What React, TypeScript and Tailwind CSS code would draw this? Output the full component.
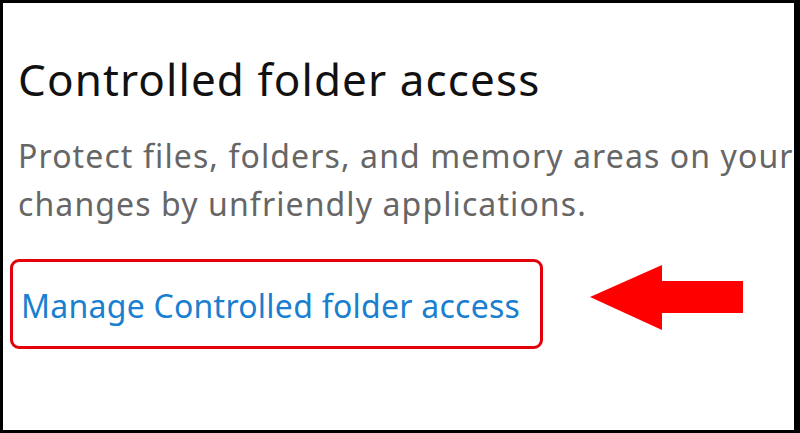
import React from "react";

export default function App() {
  return (
    <div
      className="w-[800px] h-[433px] bg-white border-black border-l-[3px] border-t-[3px] border-r-[6px] border-b-[3px] overflow-hidden box-border"
      style={{ fontFamily: '"Noto Sans", "Open Sans", sans-serif' }}
    >
      <div className="pl-[15px] pt-[50px] w-[1400px]">
        <h1 className="text-[44px] leading-[52px] text-[#111] tracking-[1.1px]">
          Controlled folder access
        </h1>
        <p className="mt-[27px] text-[32px] leading-[48px] text-[#666] tracking-[1.1px]">
          Protect files, folders, and memory areas on your device from unauthorized
          <br />
          changes by unfriendly applications.
        </p>
      </div>
      <div className="flex items-start pl-[7px] mt-[31px]">
        <div className="w-[533px] h-[90px] border-[3px] border-[#e3000b] rounded-[9px] flex items-center pl-[8px]">
          <span className="text-[32px] text-[#1a7fd0] tracking-[0.25px] pt-[4px]">
            Manage Controlled folder access
          </span>
        </div>
        <svg width="153" height="66" viewBox="0 0 153 66" className="ml-[47px] mt-[6px]">
          <polygon points="0,32 72,0 72,16 153,16 153,48 72,48 72,65" fill="#ff0000" />
        </svg>
      </div>
    </div>
  );
}
